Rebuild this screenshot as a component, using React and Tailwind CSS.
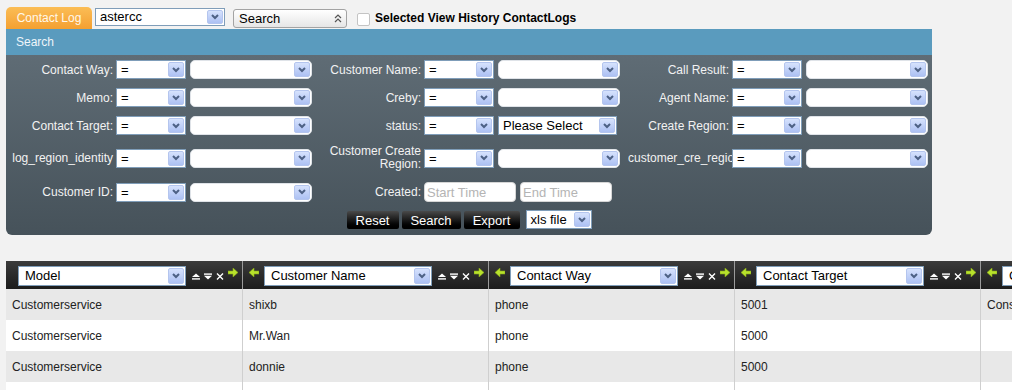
import React from "react";

const XpArrow = () => (
  <span className="flex h-full w-[16px] shrink-0 items-center justify-center rounded-[2px] border border-[#b4c5ee] bg-linear-to-b from-[#d6e2fd] to-[#adc1f3]">
    <svg width="8" height="6" viewBox="0 0 8 6">
      <path d="M1 1l3 3 3-3" stroke="#4d6185" strokeWidth="2" fill="none" />
    </svg>
  </span>
);

const OpSelect = ({ value = "=", className = "w-[70px]" }) => (
  <div className={`flex h-[19px] shrink-0 items-stretch border border-[#7f9db9] bg-white p-[1px] ${className}`}>
    <span className="flex-1 pl-[3px] text-[13px] leading-[15px] text-black">{value}</span>
    <XpArrow />
  </div>
);

const RoundSelect = () => (
  <div className="ml-[4px] flex h-[19px] w-[122px] shrink-0 justify-end rounded-[5px] border border-[#dfe3e8] bg-white p-[1px]">
    <XpArrow />
  </div>
);

const Field = ({ label, wrap, children }) => (
  <div className="flex w-[308px] shrink-0 items-center">
    <div
      className={`w-[104px] shrink-0 overflow-hidden pr-[3px] text-right text-[12px] text-[#f2f2f2] ${
        wrap ? "leading-[13px]" : "whitespace-nowrap leading-[14px]"
      }`}
    >
      {label}
    </div>
    {children}
  </div>
);

const Std = ({ label, wrap }) => (
  <Field label={label} wrap={wrap}>
    <OpSelect />
    <RoundSelect />
  </Field>
);

const GreenArrow = ({ left }) => (
  <svg width="10" height="9" viewBox="0 0 10 9" className="mt-[7px] shrink-0">
    <polygon
      points={left ? "10,3 5,3 5,0 0,4.5 5,9 5,6 10,6" : "0,3 5,3 5,0 10,4.5 5,9 5,6 0,6"}
      fill="#b8e22c"
      stroke="#86a81a"
      strokeWidth="0.6"
    />
  </svg>
);

const SortIcons = () => (
  <div className="ml-[6px] mt-[12px] flex shrink-0 items-center gap-[4px]">
    <svg width="8" height="7" viewBox="0 0 8 7">
      <path d="M0 4L4 0.5 8 4z" fill="#fff" />
      <rect y="5.2" width="8" height="1.4" fill="#fff" />
    </svg>
    <svg width="8" height="7" viewBox="0 0 8 7">
      <rect y="0.4" width="8" height="1.4" fill="#fff" />
      <path d="M0 2.8L4 6.4 8 2.8z" fill="#fff" />
    </svg>
    <svg width="8" height="7" viewBox="0 0 8 7">
      <path d="M1 0.5l6 6M7 0.5l-6 6" stroke="#fff" strokeWidth="1.4" />
    </svg>
  </div>
);

const columns = [
  { title: "Model", w: "w-[237px]", first: true },
  { title: "Customer Name", w: "w-[246px]" },
  { title: "Contact Way", w: "w-[246px]" },
  { title: "Contact Target", w: "w-[246px]" },
  { title: "Call Result", w: "w-[246px]" },
];

const rows = [
  ["Customerservice", "shixb", "phone", "5001", "Consultation"],
  ["Customerservice", "Mr.Wan", "phone", "5000", ""],
  ["Customerservice", "donnie", "phone", "5000", ""],
  ["", "", "", "", ""],
];

export default function App() {
  return (
    <div className="h-[390px] w-[1012px] overflow-hidden bg-[#f2f2f2] font-['Liberation_Sans',Arial,sans-serif]">
      {/* top bar */}
      <div className="flex items-start pl-[6px] pt-[7px]">
        <div className="flex h-[22px] w-[86px] items-center justify-center rounded-t-[5px] bg-linear-to-b from-[#fbbd55] to-[#f4a030] text-[12px] text-[#fff8ea]">
          Contact Log
        </div>
        <div className="ml-[3px] mt-[1px] flex h-[18px] w-[130px] border border-[#7f9db9] bg-white p-[1px]">
          <span className="flex-1 pl-[3px] text-[13px] leading-[14px] text-black">astercc</span>
          <XpArrow />
        </div>
        <div className="ml-[8px] mt-[2px] flex h-[19px] w-[114px] items-center rounded-[3px] border border-[#a3a3a3] bg-linear-to-b from-white to-[#e6e6e6] pl-[5px] pr-[4px]">
          <span className="flex-1 text-[13px] leading-[15px] text-black">Search</span>
          <svg width="8" height="9" viewBox="0 0 8 9">
            <path d="M1 4l3-3 3 3M1 8l3-3 3 3" stroke="#555" strokeWidth="1.2" fill="none" />
          </svg>
        </div>
        <div className="ml-[10px] mt-[6px] h-[13px] w-[13px] rounded-[2px] border border-[#c4c4c4] bg-white" />
        <div className="ml-[5px] mt-[4px] text-[12px] font-bold leading-[14px] text-black">
          Selected View History ContactLogs
        </div>
      </div>

      {/* search panel */}
      <div className="ml-[6px] w-[926px]">
        <div className="flex h-[26px] items-center bg-[#5a9bbe] pl-[10px] text-[12px] text-[#eef5fa]">Search</div>
        <div className="rounded-b-[6px] bg-linear-to-b from-[#5f6c75] to-[#46525a] pb-[6px] pt-[5px]">
          <div className="flex pl-[6px]">
            <Std label="Contact Way:" />
            <Std label="Customer Name:" />
            <Std label="Call Result:" />
          </div>
          <div className="mt-[9px] flex pl-[6px]">
            <Std label="Memo:" />
            <Std label="Creby:" />
            <Std label="Agent Name:" />
          </div>
          <div className="mt-[9px] flex pl-[6px]">
            <Std label="Contact Target:" />
            <Field label="status:">
              <OpSelect />
              <div className="ml-[4px] flex h-[19px] w-[119px] shrink-0 border border-[#7f9db9] bg-white p-[1px]">
                <span className="flex-1 pl-[3px] text-[13px] leading-[15px] text-black">Please Select</span>
                <XpArrow />
              </div>
            </Field>
            <Std label="Create Region:" />
          </div>
          <div className="mt-[9px] flex h-[28px] items-center pl-[6px]">
            <Std label="log_region_identity" />
            <Std label="Customer Create Region:" wrap />
            <Std label="customer_cre_region" />
          </div>
          <div className="mt-[10px] flex h-[20px] items-center pl-[6px]">
            <Std label="Customer ID:" />
            <Field label="Created:">
              <input
                readOnly
                placeholder="Start Time"
                className="h-[20px] w-[92px] rounded-[4px] border border-[#d6d6d6] bg-white px-[2px] text-[13px] outline-none placeholder:text-[#b4b4b4]"
              />
              <input
                readOnly
                placeholder="End Time"
                className="ml-[4px] h-[20px] w-[92px] rounded-[4px] border border-[#d6d6d6] bg-white px-[2px] text-[13px] outline-none placeholder:text-[#b4b4b4]"
              />
            </Field>
          </div>
          <div className="mt-[8px] flex h-[19px] items-start justify-center">
            {[
              ["Reset", "w-[52px]"],
              ["Search", "w-[59px] ml-[3px]"],
              ["Export", "w-[56px] ml-[3px]"],
            ].map(([t, c]) => (
              <button
                key={t}
                className={`mt-[1px] h-[18px] rounded-[2px] bg-linear-to-b from-[#4a4a4a] via-[#1a1a1a] to-black text-[13px] leading-[17px] text-white ${c}`}
              >
                {t}
              </button>
            ))}
            <div className="ml-[6px] flex h-[19px] w-[66px] border border-[#7f9db9] bg-white p-[1px]">
              <span className="flex-1 pl-[3px] text-[13px] leading-[15px] text-black">xls file</span>
              <XpArrow />
            </div>
          </div>
        </div>
      </div>

      {/* grid */}
      <div className="mt-[26px] flex flex-col pl-[6px]">
        <div className="flex h-[28px] bg-linear-to-b from-[#3b3b3b] to-[#1c1c1c]">
          {columns.map((c) => (
            <div
              key={c.title}
              className={`flex shrink-0 items-start border-r border-[#9a9a9a] ${c.w} ${c.first ? "pl-[12px]" : "pl-[6px]"}`}
            >
              {!c.first && <GreenArrow left />}
              <div
                className={`mt-[5px] flex h-[20px] w-[168px] shrink-0 border border-[#7f9db9] bg-white p-[1px] ${
                  c.first ? "" : "ml-[5px]"
                }`}
              >
                <span className="flex-1 pl-[5px] text-[13px] leading-[16px] text-black">{c.title}</span>
                <XpArrow />
              </div>
              <SortIcons />
              <div className="ml-[4px]">
                <GreenArrow />
              </div>
            </div>
          ))}
        </div>
        {rows.map((r, i) => (
          <div key={i} className={`flex h-[31px] ${i % 2 === 0 ? "bg-[#e8e8e8]" : "bg-white"}`}>
            {r.map((cell, j) => (
              <div
                key={j}
                className={`flex shrink-0 items-center whitespace-nowrap border-r border-[#cfcfcf] pl-[6px] text-[12px] text-[#222] ${columns[j].w}`}
              >
                {cell}
              </div>
            ))}
          </div>
        ))}
      </div>
    </div>
  );
}
